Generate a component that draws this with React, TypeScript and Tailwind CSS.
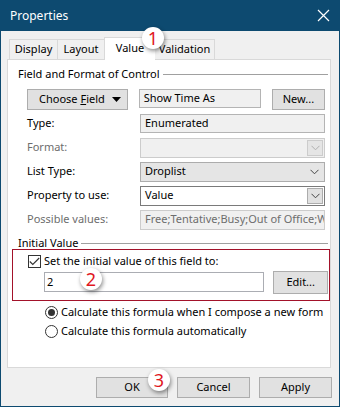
import React from "react";

const Chevron = ({ color = "#444" }: { color?: string }) => (
  <svg width="9" height="6" viewBox="0 0 9 6">
    <path d="M0.5 0.8 L4.5 4.8 L8.5 0.8" fill="none" stroke={color} strokeWidth="1" />
  </svg>
);

const Badge = ({ n, className }: { n: string; className: string }) => (
  <div
    className={`absolute w-[22px] h-[22px] rounded-full bg-white flex items-center justify-center text-[#e0181e] text-[18px] leading-none shadow-[1px_2px_4px_rgba(0,0,0,0.45)] z-20 ${className}`}
  >
    {n}
  </div>
);

const Btn = ({ children, className = "" }: { children: React.ReactNode; className?: string }) => (
  <div
    className={`h-[21px] bg-[#e1e1e1] border border-[#adadad] flex items-center text-black whitespace-nowrap ${className}`}
  >
    {children}
  </div>
);

export default function App() {
  return (
    <div
      className="relative w-[340px] h-[407px] bg-[#0d4a70] flex flex-col text-[11px] text-black overflow-hidden whitespace-nowrap"
      style={{ fontFamily: '"Segoe UI", "Noto Sans", sans-serif' }}
    >
      {/* title bar */}
      <div className="h-[31px] flex items-center justify-between pl-[10px] pr-[10px] text-white shrink-0">
        <span className="text-[12px]">Properties</span>
        <svg width="13" height="13" viewBox="0 0 13 13">
          <path d="M1 1 L12 12 M12 1 L1 12" stroke="white" strokeWidth="1.2" />
        </svg>
      </div>

      {/* body */}
      <div className="flex-1 mx-[1px] mb-[1px] bg-[#f0f0f0] flex flex-col pl-[6px] pr-[8px] pt-[6px]">
        {/* tabs */}
        <div className="flex items-end pl-[2px] h-[22px] relative z-10">
          <div className="h-[20px] w-[49px] border border-b-0 border-[#d9d9d9] bg-[#f0f0f0] flex items-center justify-center">
            Display
          </div>
          <div className="h-[20px] w-[47px] border border-l-0 border-b-0 border-[#d9d9d9] bg-[#f0f0f0] flex items-center justify-center">
            Layout
          </div>
          <div className="h-[23px] w-[52px] -mx-[1px] mb-[-1px] border border-b-0 border-[#d9d9d9] bg-white flex items-start pt-[2px] justify-center">
            Value
          </div>
          <div className="h-[20px] w-[60px] border border-l-0 border-b-0 border-[#d9d9d9] bg-[#f0f0f0] flex items-center justify-center">
            Validation
          </div>
        </div>

        {/* panel */}
        <div className="h-[309px] bg-white border border-[#d9d9d9] relative">
          {/* group header */}
          <div className="flex items-center mt-[6px] ml-[10px] mr-[2px]">
            <span>Field and Format of Control</span>
            <div className="flex-1 h-px bg-[#a0a0a0] ml-[3px]" />
          </div>

          {/* rows */}
          <div className="ml-[19px] mr-[5px] mt-[6px] flex flex-col">
            <div className="flex items-start h-[20px]">
              <Btn className="w-[102px] justify-between pl-[11px] pr-[6px]">
                <span>
                  Choose <span className="underline">F</span>ield
                </span>
                <svg width="9" height="5" viewBox="0 0 9 5">
                  <path d="M0 0 L9 0 L4.5 5 Z" fill="black" />
                </svg>
              </Btn>
              <div className="ml-[11px] w-[124px] h-[19px] bg-[#f0f0f0] border border-[#b4b4b4] flex items-center pl-[4px]">
                Show Time As
              </div>
              <Btn className="ml-[11px] w-[54px] justify-center">New...</Btn>
            </div>

            <div className="flex items-center h-[20px] mt-[5px]">
              <span className="w-[113px]">Type:</span>
              <div className="w-[185px] h-[19px] bg-[#f0f0f0] border border-[#b4b4b4] flex items-center pl-[4px]">
                Enumerated
              </div>
            </div>

            <div className="flex items-center h-[20px] mt-[4px]">
              <span className="w-[113px] text-[#6d6d6d]">Format:</span>
              <div className="w-[185px] h-[20px] bg-[#f0f0f0] border border-[#cccccc] flex items-center justify-end pr-[1px]">
                <div className="w-[16px] h-[16px] bg-[#e5e5e5] border border-[#cccccc] flex items-center justify-center">
                  <Chevron color="#b0b0b0" />
                </div>
              </div>
            </div>

            <div className="flex items-center h-[20px] mt-[4px]">
              <span className="w-[113px]">List Type:</span>
              <div className="w-[185px] h-[20px] bg-[#e5e5e5] border border-[#acacac] flex items-center justify-between pl-[4px] pr-[5px]">
                <span>Droplist</span>
                <Chevron />
              </div>
            </div>

            <div className="flex items-center h-[20px] mt-[4px]">
              <span className="w-[113px]">Property to use:</span>
              <div className="w-[185px] h-[20px] bg-white border border-[#7a7a7a] flex items-center justify-between pl-[4px] pr-[1px]">
                <span>Value</span>
                <div className="w-[16px] h-[16px] bg-[#e1e1e1] border border-[#acacac] flex items-center justify-center">
                  <Chevron />
                </div>
              </div>
            </div>

            <div className="flex items-center h-[20px] mt-[4px]">
              <span className="w-[113px] text-[#6d6d6d]">Possible values:</span>
              <div className="w-[185px] h-[20px] bg-[#f0f0f0] border border-[#cccccc] flex items-center pl-[4px] overflow-hidden text-[#6d6d6d]">
                <span className="w-[179px] overflow-hidden">Free;Tentative;Busy;Out of Office;W</span>
              </div>
            </div>
          </div>

          {/* Initial Value header */}
          <div className="flex items-center mt-[7px] ml-[10px] mr-[2px] h-[14px]">
            <span>Initial Value</span>
            <div className="flex-1 h-px bg-[#a0a0a0] ml-[3px]" />
          </div>

          {/* red box */}
          <div className="ml-[4px] mr-[0px] mt-[-2px] h-[52px] border border-[#a3122a] pl-[15px] pr-[1px] pt-[5px]">
            <div className="flex items-center h-[14px]">
              <div className="w-[13px] h-[13px] border border-[#333] bg-white flex items-center justify-center">
                <svg width="11" height="9" viewBox="0 0 11 9">
                  <path d="M0.8 4.5 L3.8 7.5 L10.2 1" fill="none" stroke="#333" strokeWidth="1.1" />
                </svg>
              </div>
              <span className="ml-[3px]">Set the initial value of this field to:</span>
            </div>
            <div className="flex items-center mt-[2px] h-[23px]">
              <div className="ml-[16px] w-[222px] h-[20px] bg-white border border-[#abadb3] flex items-center pl-[2px]">
                2
              </div>
              <Btn className="ml-[9px] w-[55px] h-[23px] justify-center">Edit...</Btn>
            </div>
          </div>

          {/* radios */}
          <div className="ml-[37px] mt-[2px] flex flex-col">
            <div className="flex items-center h-[19px]">
              <div className="w-[13px] h-[13px] rounded-full border border-[#333] bg-white flex items-center justify-center">
                <div className="w-[7px] h-[7px] rounded-full bg-[#333]" />
              </div>
              <span className="ml-[3px]">Calculate this formula when I compose a new form</span>
            </div>
            <div className="flex items-center h-[19px]">
              <div className="w-[13px] h-[13px] rounded-full border border-[#333] bg-white" />
              <span className="ml-[3px]">Calculate this formula automatically</span>
            </div>
          </div>
        </div>

        {/* bottom buttons */}
        <div className="flex justify-end gap-[9px] mt-[9px] -mr-[1px]">
          <Btn className="w-[72px] justify-center">OK</Btn>
          <Btn className="w-[73px] justify-center">Cancel</Btn>
          <Btn className="w-[73px] justify-center">Apply</Btn>
        </div>
      </div>

      <Badge n="1" className="left-[142px] top-[27px]" />
      <Badge n="2" className="left-[80px] top-[268px]" />
      <Badge n="3" className="left-[148px] top-[369px]" />
    </div>
  );
}
